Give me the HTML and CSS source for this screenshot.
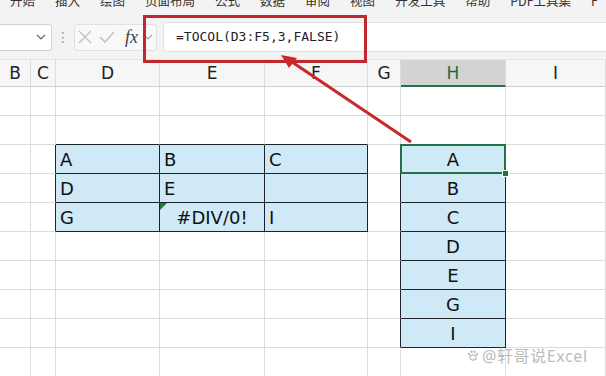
FILE: index.html
```html
<!DOCTYPE html>
<html lang="zh-CN">
<head>
    <meta charset="UTF-8">
    <title>TOCOL</title>
    <link rel="stylesheet" href="styles.css">
</head>
<body>
    <div class="ribbon">
        <span>开始</span><span>插入</span><span>绘图</span><span>页面布局</span><span>公式</span><span>数据</span>
        <span>审阅</span><span>视图</span><span>开发工具</span><span>帮助</span><span>PDF工具集</span><span>F</span>
    </div>

    <div class="fbar">
        <div class="namebox">
            <svg width="10" height="6" viewBox="0 0 10 6"><path d="M1 1 L5 5 L9 1" fill="none" stroke="#666" stroke-width="1.2"/></svg>
        </div>
        <div class="dots">⋮</div>
        <div class="fnbox">
            <svg class="ic-x" width="14" height="14" viewBox="0 0 14 14"><path d="M1 1 L13 13 M13 1 L1 13" stroke="#bdbdbd" stroke-width="1.3"/></svg>
            <svg class="ic-ok" width="16" height="14" viewBox="0 0 16 14"><path d="M1 7 L6 12 L15 2" fill="none" stroke="#bdbdbd" stroke-width="1.3"/></svg>
            <i class="fx">fx</i>
            <svg class="ic-dd" width="10" height="6" viewBox="0 0 10 6"><path d="M1 1 L5 5 L9 1" fill="none" stroke="#aaa" stroke-width="1.2"/></svg>
        </div>
        <div class="formula">=TOCOL(D3:F5,3,FALSE)</div>
    </div>

    <div class="sheet">
        <div class="hd">B</div><div class="hd">C</div><div class="hd">D</div><div class="hd">E</div>
        <div class="hd">F</div><div class="hd">G</div><div class="hd hd-active">H</div><div class="hd">I</div>

        <div></div><div></div><div></div><div></div><div></div><div></div><div></div><div></div>

        <div></div><div></div><div class="edge-top"></div><div class="edge-top"></div><div class="edge-top"></div><div></div><div class="edge-top"></div><div></div>

        <div></div><div class="edge-left"></div><div class="fill">A</div><div class="fill">B</div><div class="fill">C</div><div class="edge-left"></div><div class="fill mid sel">A</div><div></div>

        <div></div><div class="edge-left"></div><div class="fill">D</div><div class="fill">E</div><div class="fill"></div><div class="edge-left"></div><div class="fill mid">B</div><div></div>

        <div></div><div class="edge-left"></div><div class="fill">G</div><div class="fill mid err">#DIV/0!</div><div class="fill">I</div><div class="edge-left"></div><div class="fill mid">C</div><div></div>

        <div></div><div></div><div></div><div></div><div></div><div class="edge-left"></div><div class="fill mid">D</div><div></div>

        <div></div><div></div><div></div><div></div><div></div><div class="edge-left"></div><div class="fill mid">E</div><div></div>

        <div></div><div></div><div></div><div></div><div></div><div class="edge-left"></div><div class="fill mid">G</div><div></div>

        <div></div><div></div><div></div><div></div><div></div><div class="edge-left"></div><div class="fill mid">I</div><div></div>

        <div></div><div></div><div></div><div></div><div></div><div></div><div></div><div></div>
    </div>

    <div class="callout"></div>
    <svg class="arrow" width="606" height="376" viewBox="0 0 606 376">
        <line x1="411" y1="142" x2="292" y2="62" stroke="#c9272b" stroke-width="3"/>
        <polygon points="281,55 297,58 289,68" fill="#c9272b"/>
    </svg>

    <div class="watermark">
        <svg width="12" height="11" viewBox="0 0 12 11">
            <ellipse cx="6" cy="7.5" rx="3.2" ry="2.6" fill="none" stroke="#bcbcbc" stroke-width="1.2"/>
            <circle cx="2" cy="4" r="1.2" fill="#bcbcbc"/>
            <circle cx="4.5" cy="1.8" r="1.2" fill="#bcbcbc"/>
            <circle cx="7.5" cy="1.8" r="1.2" fill="#bcbcbc"/>
            <circle cx="10" cy="4" r="1.2" fill="#bcbcbc"/>
        </svg>
        <span>@轩哥说Excel</span>
    </div>
</body>
</html>
```

FILE: styles.css
```css
body {
    margin: 0;
    width: 606px;
    height: 376px;
    overflow: hidden;
    position: relative;
    background-color: #fff;
    font-family: "DejaVu Sans", sans-serif;
    color: #111;
}
.ribbon {
    height: 14px;
    background-color: #f3f3f3;
    display: flex;
    gap: 20px;
    padding-left: 10px;
    overflow: hidden;
    font-family: "Noto Sans CJK SC", sans-serif;
    font-size: 12.5px;
    line-height: 13px;
    color: #333;
    white-space: nowrap;
}
.ribbon span {
    margin-top: -6px;
}
.fbar {
    height: 45px;
    background-color: #f3f3f3;
    display: flex;
    align-items: center;
    padding-top: 1px;
    box-sizing: border-box;
}
.namebox {
    width: 56px;
    height: 27px;
    margin-left: -4px;
    box-sizing: border-box;
    background-color: #fff;
    border: 1px solid #d2d2d2;
    border-radius: 3px;
    display: flex;
    align-items: center;
    justify-content: flex-end;
    padding-right: 5px;
}
.dots {
    width: 22px;
    text-align: center;
    color: #999;
    font-size: 14px;
}
.fnbox {
    width: 83px;
    height: 27px;
    box-sizing: border-box;
    border: 1px solid #e0e0e0;
    border-radius: 4px;
    background-color: #f9f9f9;
    display: flex;
    align-items: center;
    padding-left: 3px;
}
.ic-ok {
    margin-left: 7px;
}
.fx {
    font-family: "Liberation Serif", serif;
    font-size: 18px;
    color: #444;
    margin-left: 10px;
}
.ic-dd {
    margin-left: 5px;
}
.formula {
    margin-left: 6px;
    flex: 1;
    height: 30px;
    box-sizing: border-box;
    background-color: #fff;
    border: 1px solid #e2e2e2;
    border-right: none;
    border-radius: 4px 0 0 4px;
    padding-left: 12px;
    font-family: "DejaVu Sans Mono", monospace;
    font-size: 13px;
    line-height: 28px;
    color: #222;
}
.sheet {
    display: grid;
    grid-template-columns: 31px 25px 104px 105px 103px 33px 105px 100px;
    grid-template-rows: 28px repeat(10, 29px);
}
.sheet > div {
    box-sizing: border-box;
    border-right: 1px solid #dcdcdc;
    border-bottom: 1px solid #dcdcdc;
    position: relative;
    font-size: 18px;
    line-height: 30px;
    padding-left: 4px;
    white-space: nowrap;
}
.sheet > .hd {
    background-color: #f6f6f6;
    border-top: 1px solid #e4e4e4;
    border-bottom-color: #cfcfcf;
    text-align: center;
    padding-left: 0;
    font-size: 17px;
    line-height: 27px;
    color: #222;
}
.sheet > .hd-active {
    background-color: #d3d3d3;
    color: #1f6b42;
    border-bottom: 2px solid #217346;
}
.sheet > .edge-top {
    border-bottom-color: #1d2328;
}
.sheet > .edge-left {
    border-right-color: #1d2328;
}
.sheet > .fill {
    background-color: #cfe9f7;
    border-right-color: #1d2328;
    border-bottom-color: #1d2328;
}
.sheet > .mid {
    text-align: center;
    padding-left: 0;
}
.sel::after {
    content: "";
    position: absolute;
    left: -1px;
    top: -1px;
    right: -1px;
    bottom: -1px;
    border: 2px solid #217346;
}
.sel::before {
    content: "";
    position: absolute;
    right: -4px;
    bottom: -4px;
    width: 5px;
    height: 5px;
    background-color: #217346;
    border: 1px solid #fff;
    z-index: 1;
}
.err::before {
    content: "";
    position: absolute;
    left: 0;
    top: 0;
    border-top: 7px solid #1e7a3c;
    border-right: 7px solid transparent;
}
.callout {
    position: absolute;
    left: 143px;
    top: 15px;
    width: 224px;
    height: 48px;
    box-sizing: border-box;
    border: 3px solid #c0282d;
}
.arrow {
    position: absolute;
    left: 0;
    top: 0;
}
.watermark {
    position: absolute;
    left: 467px;
    top: 343px;
    display: flex;
    align-items: center;
    gap: 3px;
    font-family: "Noto Sans", "Noto Sans CJK SC", sans-serif;
    font-size: 16px;
    letter-spacing: 0.6px;
    color: #bcbcbc;
    text-shadow: 0 0 2px #fff, 0 0 2px #fff;
}
```
